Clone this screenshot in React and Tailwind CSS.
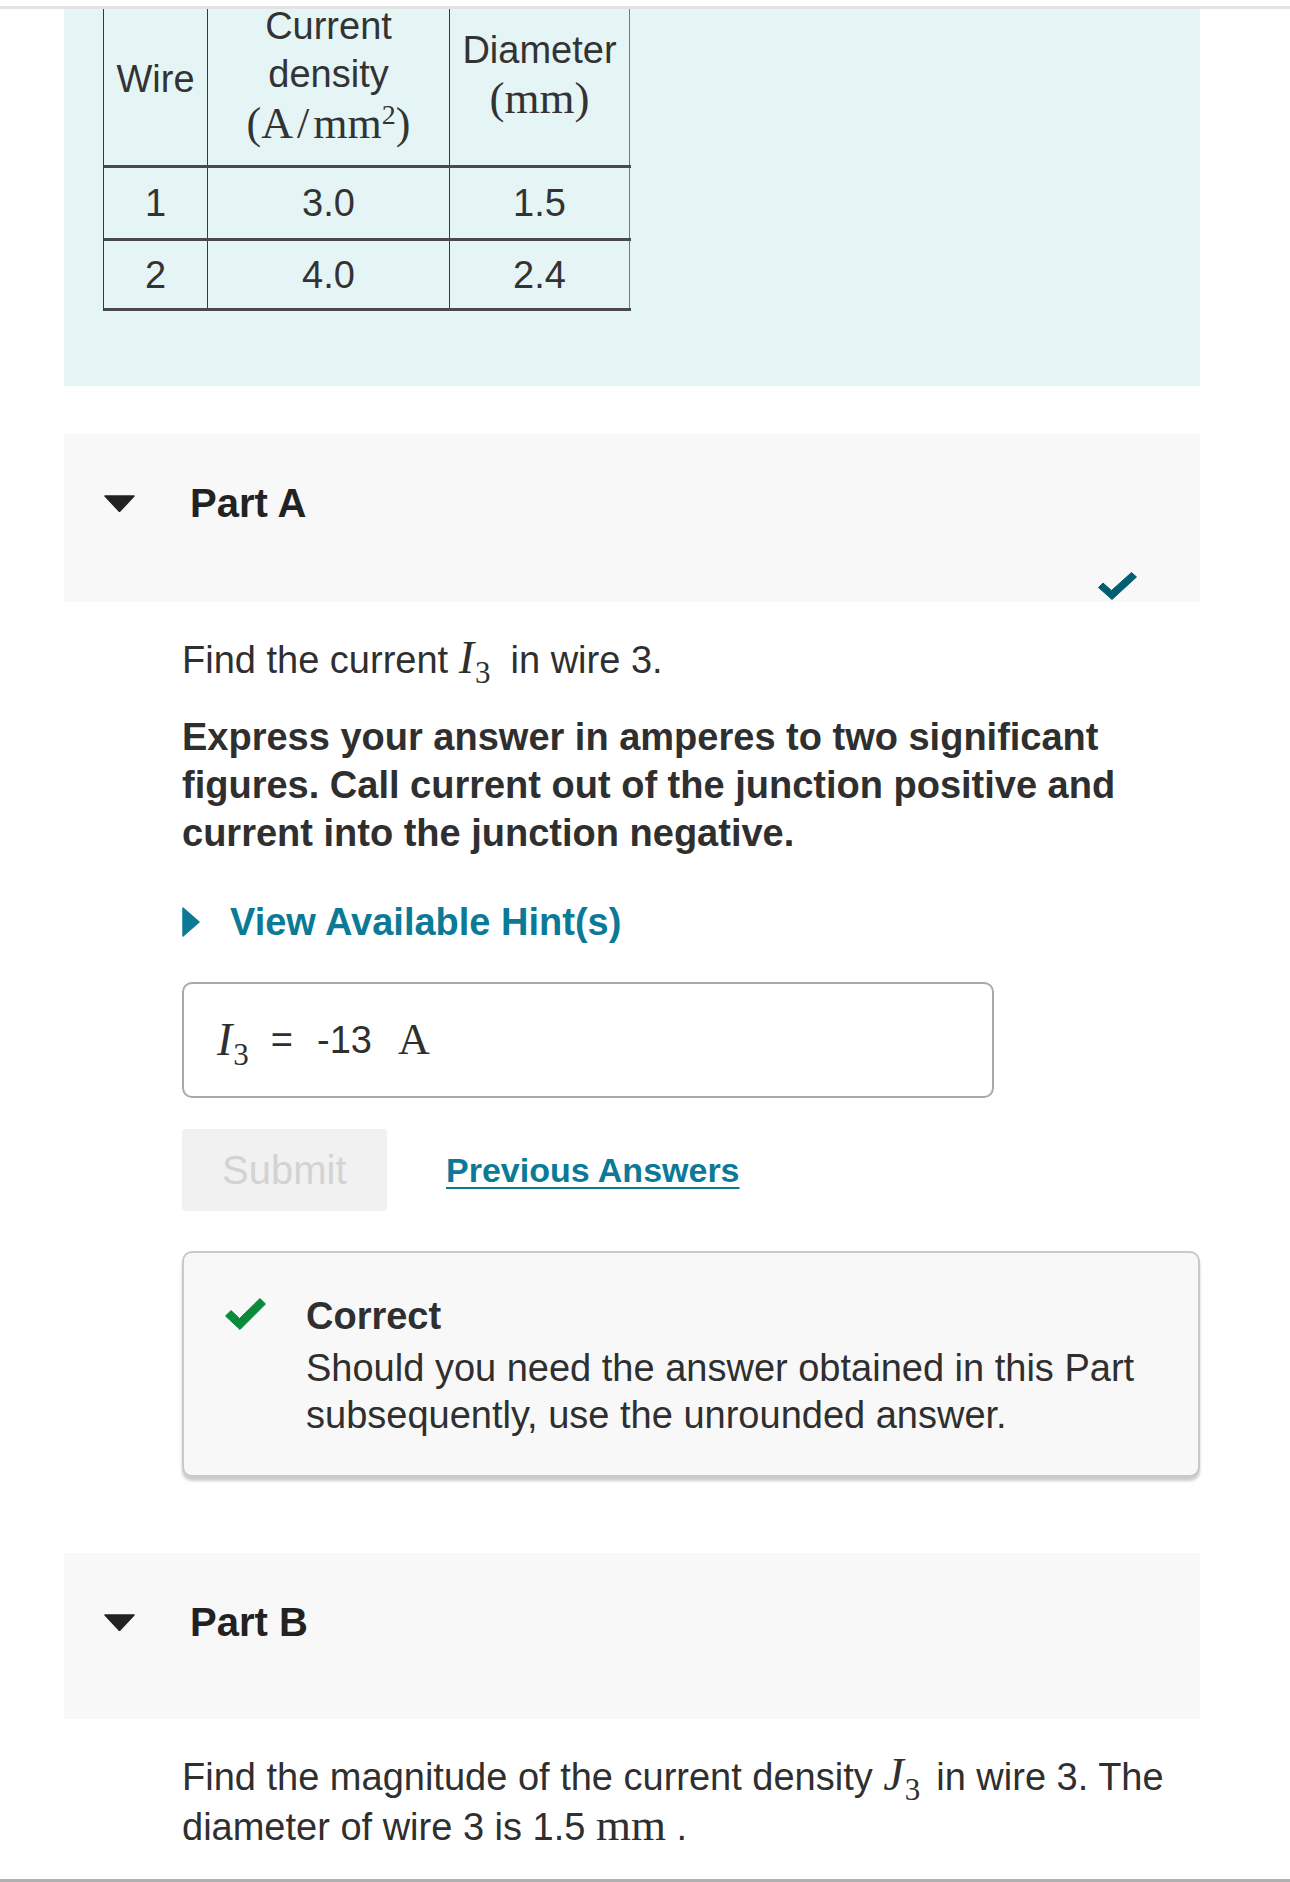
import React from 'react';

const serif = "font-['Liberation_Serif','Times_New_Roman',serif]";

const Sym = ({ v, sub }) => (
  <span className={`${serif} whitespace-nowrap text-[46px] leading-none`}>
    <span className="italic">{v}</span>
    <span className="relative top-[10px] ml-[1px] text-[31px]">{sub}</span>
  </span>
);

const DownTriangle = () => (
  <svg width="31" height="17" viewBox="0 0 31 17">
    <path d="M1 1H30L15.5 16.5Z" fill="#222" stroke="#222" strokeWidth="1.5" strokeLinejoin="round" />
  </svg>
);

const PartHeader = ({ label, check, h }) => (
  <div className={`relative ${h} bg-[#f8f8f8] pl-[40px] pt-[45px]`}>
    <div className="flex h-[48px] items-center">
      <DownTriangle />
      <span className="ml-[55px] text-[40px] font-bold text-[#222]">{label}</span>
    </div>
    {check && (
      <svg className="absolute bottom-[2px] right-[63px]" width="39" height="28" viewBox="0 0 39 28">
        <path d="M0.5 15.5L5 11L13.5 18.5L33.5 0.5L38.5 5L14 27.5Z" fill="#035e72" strokeLinejoin="round" stroke="#035e72" strokeWidth="1" />
      </svg>
    )}
  </div>
);

const cell = 'flex items-center justify-center border-r-[1.5px] border-[#3a3a3a]';

export default function App() {
  return (
    <div className="relative flex h-[1882px] w-[1290px] flex-col overflow-hidden bg-white font-['Liberation_Sans',Arial,sans-serif] text-[38px] leading-[48px] text-[#2f2f2f]">
      <div className="mt-[6px] h-[3px] bg-[#e3e3e3]" />

      {/* table panel */}
      <div className="ml-[64px] h-[377px] w-[1136px] shrink-0 overflow-hidden bg-[#e5f5f6]">
        <div className="-mt-[22px] ml-[39px] w-[528px] border-l-[1.5px] border-[#3a3a3a] text-[#333]">
          <div className="flex h-[181px] border-b-[3px] border-[#4a4a4a] text-center">
            <div className={`${cell} w-[104px] pt-[6px]`}>Wire</div>
            <div className={`${cell} w-[242px] flex-col`}>
              <span>Current</span>
              <span>density</span>
              <span className={`${serif} text-[44px] leading-[52px]`}>
                (A<span className="mx-[4px]">/</span>mm<sup className="text-[28px]">2</sup>)
              </span>
            </div>
            <div className={`${cell} w-[180px] flex-col border-[#777] pb-[4px]`}>
              <span>Diameter</span>
              <span className={`${serif} text-[45px]`}>(mm)</span>
            </div>
          </div>
          <div className="flex h-[73px] border-b-[3px] border-[#4a4a4a]">
            <div className={`${cell} w-[104px]`}>1</div>
            <div className={`${cell} w-[242px]`}>3.0</div>
            <div className={`${cell} w-[180px] border-[#777]`}>1.5</div>
          </div>
          <div className="flex h-[70px] border-b-[3px] border-[#4a4a4a]">
            <div className={`${cell} w-[104px]`}>2</div>
            <div className={`${cell} w-[242px]`}>4.0</div>
            <div className={`${cell} w-[180px] border-[#777]`}>2.4</div>
          </div>
        </div>
      </div>

      <div className="ml-[64px] mt-[48px] w-[1136px]">
        <PartHeader label="Part A" check h="h-[168px]" />

        <div className="pl-[118px]">
          <p className="mt-[33px] h-[48px]">
            Find the current <Sym v="I" sub="3" />
            <span className="ml-[20px]">in wire 3.</span>
          </p>
          <p className="mt-[30px] font-bold">
            Express your answer in amperes to two significant figures. Call current out of the junction positive and
            current into the junction negative.
          </p>

          <div className="mt-[41px] flex h-[48px] items-center">
            <svg width="18" height="30" viewBox="0 0 18 30">
              <path d="M1 1L17 15L1 29Z" fill="#0b7a97" stroke="#0b7a97" strokeWidth="1.5" strokeLinejoin="round" />
            </svg>
            <span className="ml-[30px] font-bold text-[#0b7a97]">View Available Hint(s)</span>
          </div>

          <div className="mt-[36px] flex h-[116px] w-[812px] items-center rounded-[10px] border-2 border-[#a9a9a9] pl-[33px]">
            <Sym v="I" sub="3" />
            <span className="ml-[22px]">=</span>
            <span className="ml-[24px]">-13</span>
            <span className={`${serif} ml-[26px] text-[44px]`}>A</span>
          </div>

          <div className="mt-[31px] flex items-center">
            <div className="flex h-[82px] w-[205px] items-center rounded-[4px] bg-[#f1f1f1] pl-[40px] text-[40px] text-[#d3d3d3]">
              Submit
            </div>
            <span className="ml-[59px] text-[34px] font-bold text-[#0b7a97] underline decoration-2 underline-offset-[5px]">
              Previous Answers
            </span>
          </div>

          <div className="mt-[40px] flex rounded-[10px] border-2 border-[#c9c9c9] bg-[#f8f8f8] pb-[36px] pl-[41px] pt-[39px] shadow-[0_4px_3px_rgba(0,0,0,0.2)]">
            <svg className="mt-[6px] shrink-0" width="41" height="32" viewBox="0 0 41 32">
              <path d="M0.5 18L6 12.5L14.5 20.5L35 0.5L40.5 6L15 31.5Z" fill="#0a8a3c" stroke="#0a8a3c" strokeWidth="1" strokeLinejoin="round" />
            </svg>
            <div className="ml-[40px]">
              <div className="font-bold">Correct</div>
              <p className="mt-[5px] leading-[47px]">
                Should you need the answer obtained in this Part subsequently, use the unrounded answer.
              </p>
            </div>
          </div>
        </div>

        <div className="mt-[76px]">
          <PartHeader label="Part B" h="h-[166px]" />
        </div>

        <p className="mt-[33px] pl-[118px] leading-[50px]">
          Find the magnitude of the current density <Sym v="J" sub="3" />
          <span className="ml-[16px]">in wire 3. The diameter of wire 3 is 1.5</span>{' '}
          <span className={`${serif} text-[45px] leading-none`}>mm</span> .
        </p>
      </div>

      <div className="mt-auto h-[3px] bg-[#b0b0b0]" />
    </div>
  );
}
